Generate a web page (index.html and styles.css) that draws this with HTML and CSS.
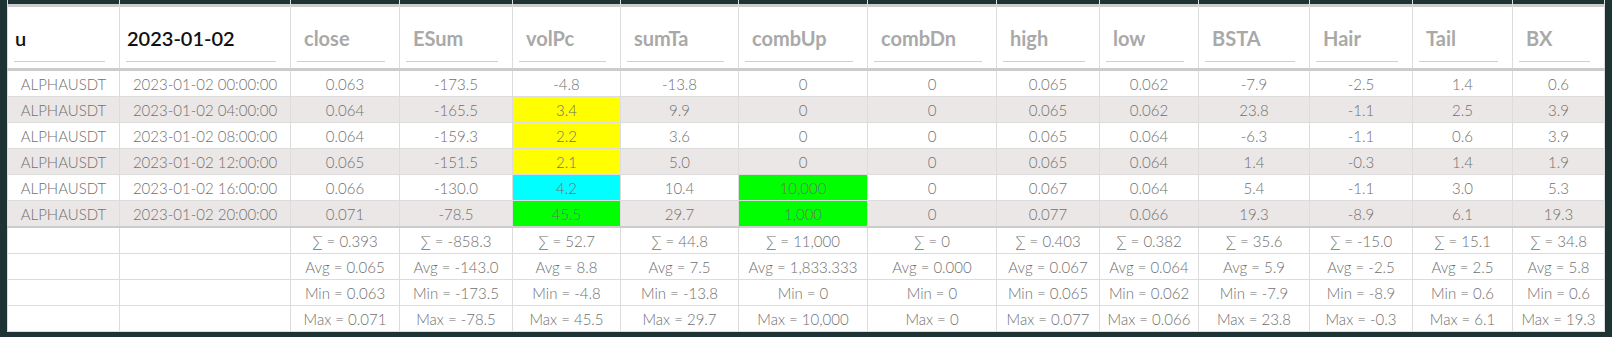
FILE: index.html
```html
<!DOCTYPE html>
<html>
<head>
<meta charset="utf-8">
<link rel="stylesheet" href="styles.css">
</head>
<body>
<table class="grid">
<colgroup>
<col class="w112"><col class="w171"><col class="w109"><col class="w113"><col class="w108"><col class="w118"><col class="w129"><col class="w129"><col class="w103"><col class="w99"><col class="w111"><col class="w103"><col class="w100"><col class="w92">
</colgroup>
<thead>
<tr>
<th><div class="filter value">u</div></th>
<th><div class="filter value">2023-01-02</div></th>
<th><div class="filter">close</div></th>
<th><div class="filter">ESum</div></th>
<th><div class="filter">volPc</div></th>
<th><div class="filter">sumTa</div></th>
<th><div class="filter">combUp</div></th>
<th><div class="filter">combDn</div></th>
<th><div class="filter">high</div></th>
<th><div class="filter">low</div></th>
<th><div class="filter">BSTA</div></th>
<th><div class="filter">Hair</div></th>
<th><div class="filter">Tail</div></th>
<th><div class="filter">BX</div></th>
</tr>
</thead>
<tbody>
<tr><td>ALPHAUSDT</td><td>2023-01-02 00:00:00</td><td>0.063</td><td>-173.5</td><td>-4.8</td><td>-13.8</td><td>0</td><td>0</td><td>0.065</td><td>0.062</td><td>-7.9</td><td>-2.5</td><td>1.4</td><td>0.6</td></tr>
<tr><td>ALPHAUSDT</td><td>2023-01-02 04:00:00</td><td>0.064</td><td>-165.5</td><td class="yellow">3.4</td><td>9.9</td><td>0</td><td>0</td><td>0.065</td><td>0.062</td><td>23.8</td><td>-1.1</td><td>2.5</td><td>3.9</td></tr>
<tr><td>ALPHAUSDT</td><td>2023-01-02 08:00:00</td><td>0.064</td><td>-159.3</td><td class="yellow">2.2</td><td>3.6</td><td>0</td><td>0</td><td>0.065</td><td>0.064</td><td>-6.3</td><td>-1.1</td><td>0.6</td><td>3.9</td></tr>
<tr><td>ALPHAUSDT</td><td>2023-01-02 12:00:00</td><td>0.065</td><td>-151.5</td><td class="yellow">2.1</td><td>5.0</td><td>0</td><td>0</td><td>0.065</td><td>0.064</td><td>1.4</td><td>-0.3</td><td>1.4</td><td>1.9</td></tr>
<tr><td>ALPHAUSDT</td><td>2023-01-02 16:00:00</td><td>0.066</td><td>-130.0</td><td class="cyan">4.2</td><td>10.4</td><td class="lime">10,000</td><td>0</td><td>0.067</td><td>0.064</td><td>5.4</td><td>-1.1</td><td>3.0</td><td>5.3</td></tr>
<tr><td>ALPHAUSDT</td><td>2023-01-02 20:00:00</td><td>0.071</td><td>-78.5</td><td class="lime">45.5</td><td>29.7</td><td class="lime">1,000</td><td>0</td><td>0.077</td><td>0.066</td><td>19.3</td><td>-8.9</td><td>6.1</td><td>19.3</td></tr>
</tbody>
<tfoot>
<tr class="first"><td></td><td></td><td>∑ = 0.393</td><td>∑ = -858.3</td><td>∑ = 52.7</td><td>∑ = 44.8</td><td>∑ = 11,000</td><td>∑ = 0</td><td>∑ = 0.403</td><td>∑ = 0.382</td><td>∑ = 35.6</td><td>∑ = -15.0</td><td>∑ = 15.1</td><td>∑ = 34.8</td></tr>
<tr><td></td><td></td><td>Avg = 0.065</td><td>Avg = -143.0</td><td>Avg = 8.8</td><td>Avg = 7.5</td><td>Avg = 1,833.333</td><td>Avg = 0.000</td><td>Avg = 0.067</td><td>Avg = 0.064</td><td>Avg = 5.9</td><td>Avg = -2.5</td><td>Avg = 2.5</td><td>Avg = 5.8</td></tr>
<tr><td></td><td></td><td>Min = 0.063</td><td>Min = -173.5</td><td>Min = -4.8</td><td>Min = -13.8</td><td>Min = 0</td><td>Min = 0</td><td>Min = 0.065</td><td>Min = 0.062</td><td>Min = -7.9</td><td>Min = -8.9</td><td>Min = 0.6</td><td>Min = 0.6</td></tr>
<tr><td></td><td></td><td>Max = 0.071</td><td>Max = -78.5</td><td>Max = 45.5</td><td>Max = 29.7</td><td>Max = 10,000</td><td>Max = 0</td><td>Max = 0.077</td><td>Max = 0.066</td><td>Max = 23.8</td><td>Max = -0.3</td><td>Max = 6.1</td><td>Max = 19.3</td></tr>
</tfoot>
</table>
</body>
</html>
```
FILE: styles.css
```css
html, body {
  margin: 0;
  padding: 0;
}
body {
  background: #1e3333;
  padding: 0 8px 5px 7px;
  width: 1597px;
  height: 332px;
  font-family: "Lato", "Liberation Sans", sans-serif;
}
.grid {
  border-collapse: collapse;
  table-layout: fixed;
  width: 1597px;
}
.w112 { width: 112px; }
.w171 { width: 171px; }
.w109 { width: 109px; }
.w113 { width: 113px; }
.w108 { width: 108px; }
.w118 { width: 118px; }
.w129 { width: 129px; }
.w103 { width: 103px; }
.w99 { width: 99px; }
.w111 { width: 111px; }
.w100 { width: 100px; }
.w92 { width: 92px; }

.grid th {
  height: 62px;
  padding: 0 14px 6px 6px;
  vertical-align: bottom;
  text-align: left;
  background: linear-gradient(to bottom, #1e3333 0, #1e3333 4px, #cccccc 4px, #cccccc 7px, #ffffff 7px);
  border-left: 1px solid #dcdcdc;
  border-right: 1px solid #dcdcdc;
  border-bottom: 3px solid #cccccc;
}
.filter {
  border-bottom: 1px solid #cfcfcf;
  padding: 0 0 11px 7px;
  font-size: 20px;
  line-height: 24px;
  font-weight: 700;
  color: #a9a9a9;
  white-space: nowrap;
}
.filter.value {
  color: #111;
  font-weight: 600;
  padding-left: 1px;
}
.grid td {
  height: 25px;
  padding: 0 2px;
  text-align: center;
  font-size: 15px;
  font-weight: 300;
  color: #707070;
  border: 1px solid #dcdcdc;
  white-space: nowrap;
  background: #fff;
}
.grid tbody tr:nth-child(even) td {
  background: #ebe7e6;
}
.grid tbody tr:nth-child(even) td.yellow,
.grid td.yellow { background: #ffff00; }
.grid tbody tr:nth-child(even) td.lime,
.grid td.lime { background: #00ff00; }
.grid td.cyan { background: #00ffff; }
.grid tfoot tr.first td {
  border-top: 2px solid #cccccc;
}
```
